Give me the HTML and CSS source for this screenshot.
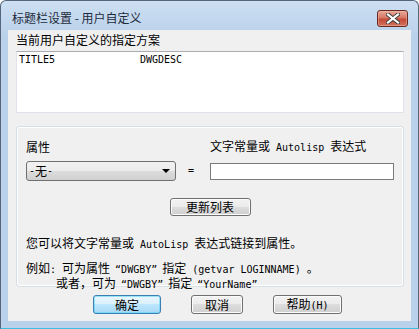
FILE: index.html
```html
<!DOCTYPE html>
<html lang="zh-CN">
<head>
  <meta charset="UTF-8">
  <title>标题栏设置 - 用户自定义</title>
  <link rel="stylesheet" href="styles.css">
</head>
<body>
  <div class="window">
    <div class="titlebar">
      <span class="title">标题栏设置 - 用户自定义</span>
      <button type="button" class="close" aria-label="关闭">
        <svg width="14" height="11" viewBox="0 0 14 11">
          <path d="M2 1.5 L12 9.5 M12 1.5 L2 9.5" stroke="#3b3b3b" stroke-width="4" stroke-linecap="square"/>
          <path d="M2 1.5 L12 9.5 M12 1.5 L2 9.5" stroke="#fff" stroke-width="2.2" stroke-linecap="square"/>
        </svg>
      </button>
    </div>

    <div class="client">
      <div class="list-label">当前用户自定义的指定方案</div>
      <div class="listbox">
        <div class="list-row en"><span class="col-name">TITLE5</span><span>DWGDESC</span></div>
      </div>

      <div class="group">
        <div class="field-grid">
          <span class="field-label">属性</span>
          <span></span>
          <span class="field-label">文字常量或<span class="en"> Autolisp </span>表达式</span>

          <div class="combo"><span class="en">-</span>无<span class="en">-</span><span class="arrow"></span></div>
          <span class="eq en">=</span>
          <input type="text" class="expr">
        </div>

        <div class="refresh-row">
          <button type="button" class="btn refresh">更新列表</button>
        </div>

        <p class="hint">您可以将文字常量或<span class="en"> AutoLisp </span>表达式链接到属性。</p>
        <p class="example">例如<span class="en">: </span>可为属性<span class="en q-open">“</span><span class="en">DWGBY</span><span class="en q-close">”</span>指定<span class="en"> (getvar LOGINNAME) </span>。</p>
        <p class="example second">或者，可为<span class="en q-open">“</span><span class="en">DWGBY</span><span class="en q-close">”</span>指定<span class="en q-open">“</span><span class="en">YourName</span><span class="en q-close">”</span></p>
      </div>

      <div class="actions">
        <button type="button" class="btn btn-default ok">确定</button>
        <button type="button" class="btn cancel">取消</button>
        <button type="button" class="btn help">帮助<span class="en">(H)</span></button>
      </div>
    </div>
  </div>
</body>
</html>
```

FILE: styles.css
```css
body { margin: 0; font-family: "Noto Sans CJK SC", sans-serif; font-size: 12px; color: #000; }
.en { font-family: "DejaVu Sans Mono", monospace; font-size: 10px; white-space: pre; }
.q-open { padding-left: 5px; }
.q-close { padding-right: 5px; }

.window { width: 419px; height: 329px; box-sizing: border-box; display: flex; flex-direction: column; padding: 0 7px 7px; border: 1px solid #55657a; border-bottom-color: #3fbfdf; border-radius: 6px 6px 0 0; background: linear-gradient(#cddff2, #b9d1ea 36px); }
.titlebar { height: 29px; display: flex; align-items: flex-start; padding-left: 4px; }
.title { margin-top: 11px; line-height: 12px; color: #1e2a3a; }
.close { margin: 9px 3px 0 auto; width: 31px; height: 17px; padding: 0; border: 1px solid #6b2a20; border-radius: 3px; display: flex; align-items: center; justify-content: center; background: linear-gradient(#e9a999, #d67866 45%, #c44a36 55%, #d0735f); box-shadow: inset 0 0 0 1px #f0b8aa80; }

.client { height: 291px; box-sizing: border-box; padding: 4px 7px 0 8px; background: #f0f0f0; }
.list-label { line-height: 12px; height: 12px; }
.listbox { margin-top: 5px; height: 62px; box-sizing: border-box; background: #fff; border: 1px solid #e2e3ea; border-top-color: #abadb3; padding: 2px 2px; }
.list-row { line-height: 12px; display: flex; }
.col-name { width: 121px; }

.group { margin-top: 13px; height: 161px; box-sizing: border-box; padding: 14px 9px 0; border: 1px solid #d5dfe5; border-radius: 3px; box-shadow: inset 0 0 0 1px #fff; }
.field-grid { display: grid; grid-template-columns: 150px 34px 1fr; grid-template-rows: 12px 20px; row-gap: 8px; align-items: center; }
.field-label { line-height: 12px; }
.combo { height: 20px; box-sizing: border-box; display: flex; align-items: center; padding-left: 2px; border: 1px solid #707070; border-radius: 3px; line-height: 12px; background: linear-gradient(#f2f2f2, #ebebeb 50%, #dddddd 50%, #cfcfcf); }
.arrow { margin: 0 5px 0 auto; width: 0; height: 0; border-left: 4px solid transparent; border-right: 4px solid transparent; border-top: 4px solid #000; }
.eq { padding-left: 12px; line-height: 12px; }
.expr { height: 17px; box-sizing: border-box; margin: 0; padding: 0; border: 1px solid #7a7a7a; background: #fff; }

.btn { font-family: inherit; font-size: 12px; line-height: 12px; padding: 0; color: #000; border: 1px solid #707070; border-radius: 3px; background: linear-gradient(#f2f2f2, #ebebeb 50%, #dddddd 50%, #cfcfcf); box-shadow: inset 0 0 0 1px #fcfcfc; }
.btn-default { border-color: #3c7fb1; background: linear-gradient(#eaf6fd, #d9f0fc 50%, #bee6fd 50%, #a7d9f5); box-shadow: inset 0 0 0 1px #48d2fc80; }
.refresh-row { margin-top: 17px; display: flex; justify-content: center; }
.refresh { width: 81px; height: 18px; }

.hint { margin: 21px 0 0; line-height: 12px; }
.example { margin: 11px 0 0; line-height: 12px; }
.example.second { margin-top: 1px; padding-left: 30px; }

.actions { margin-top: 8px; padding-left: 77px; display: flex; gap: 30px; }
.actions .btn { height: 19px; }
.ok { width: 68px; }
.cancel { width: 52px; }
.help { width: 69px; }
```
